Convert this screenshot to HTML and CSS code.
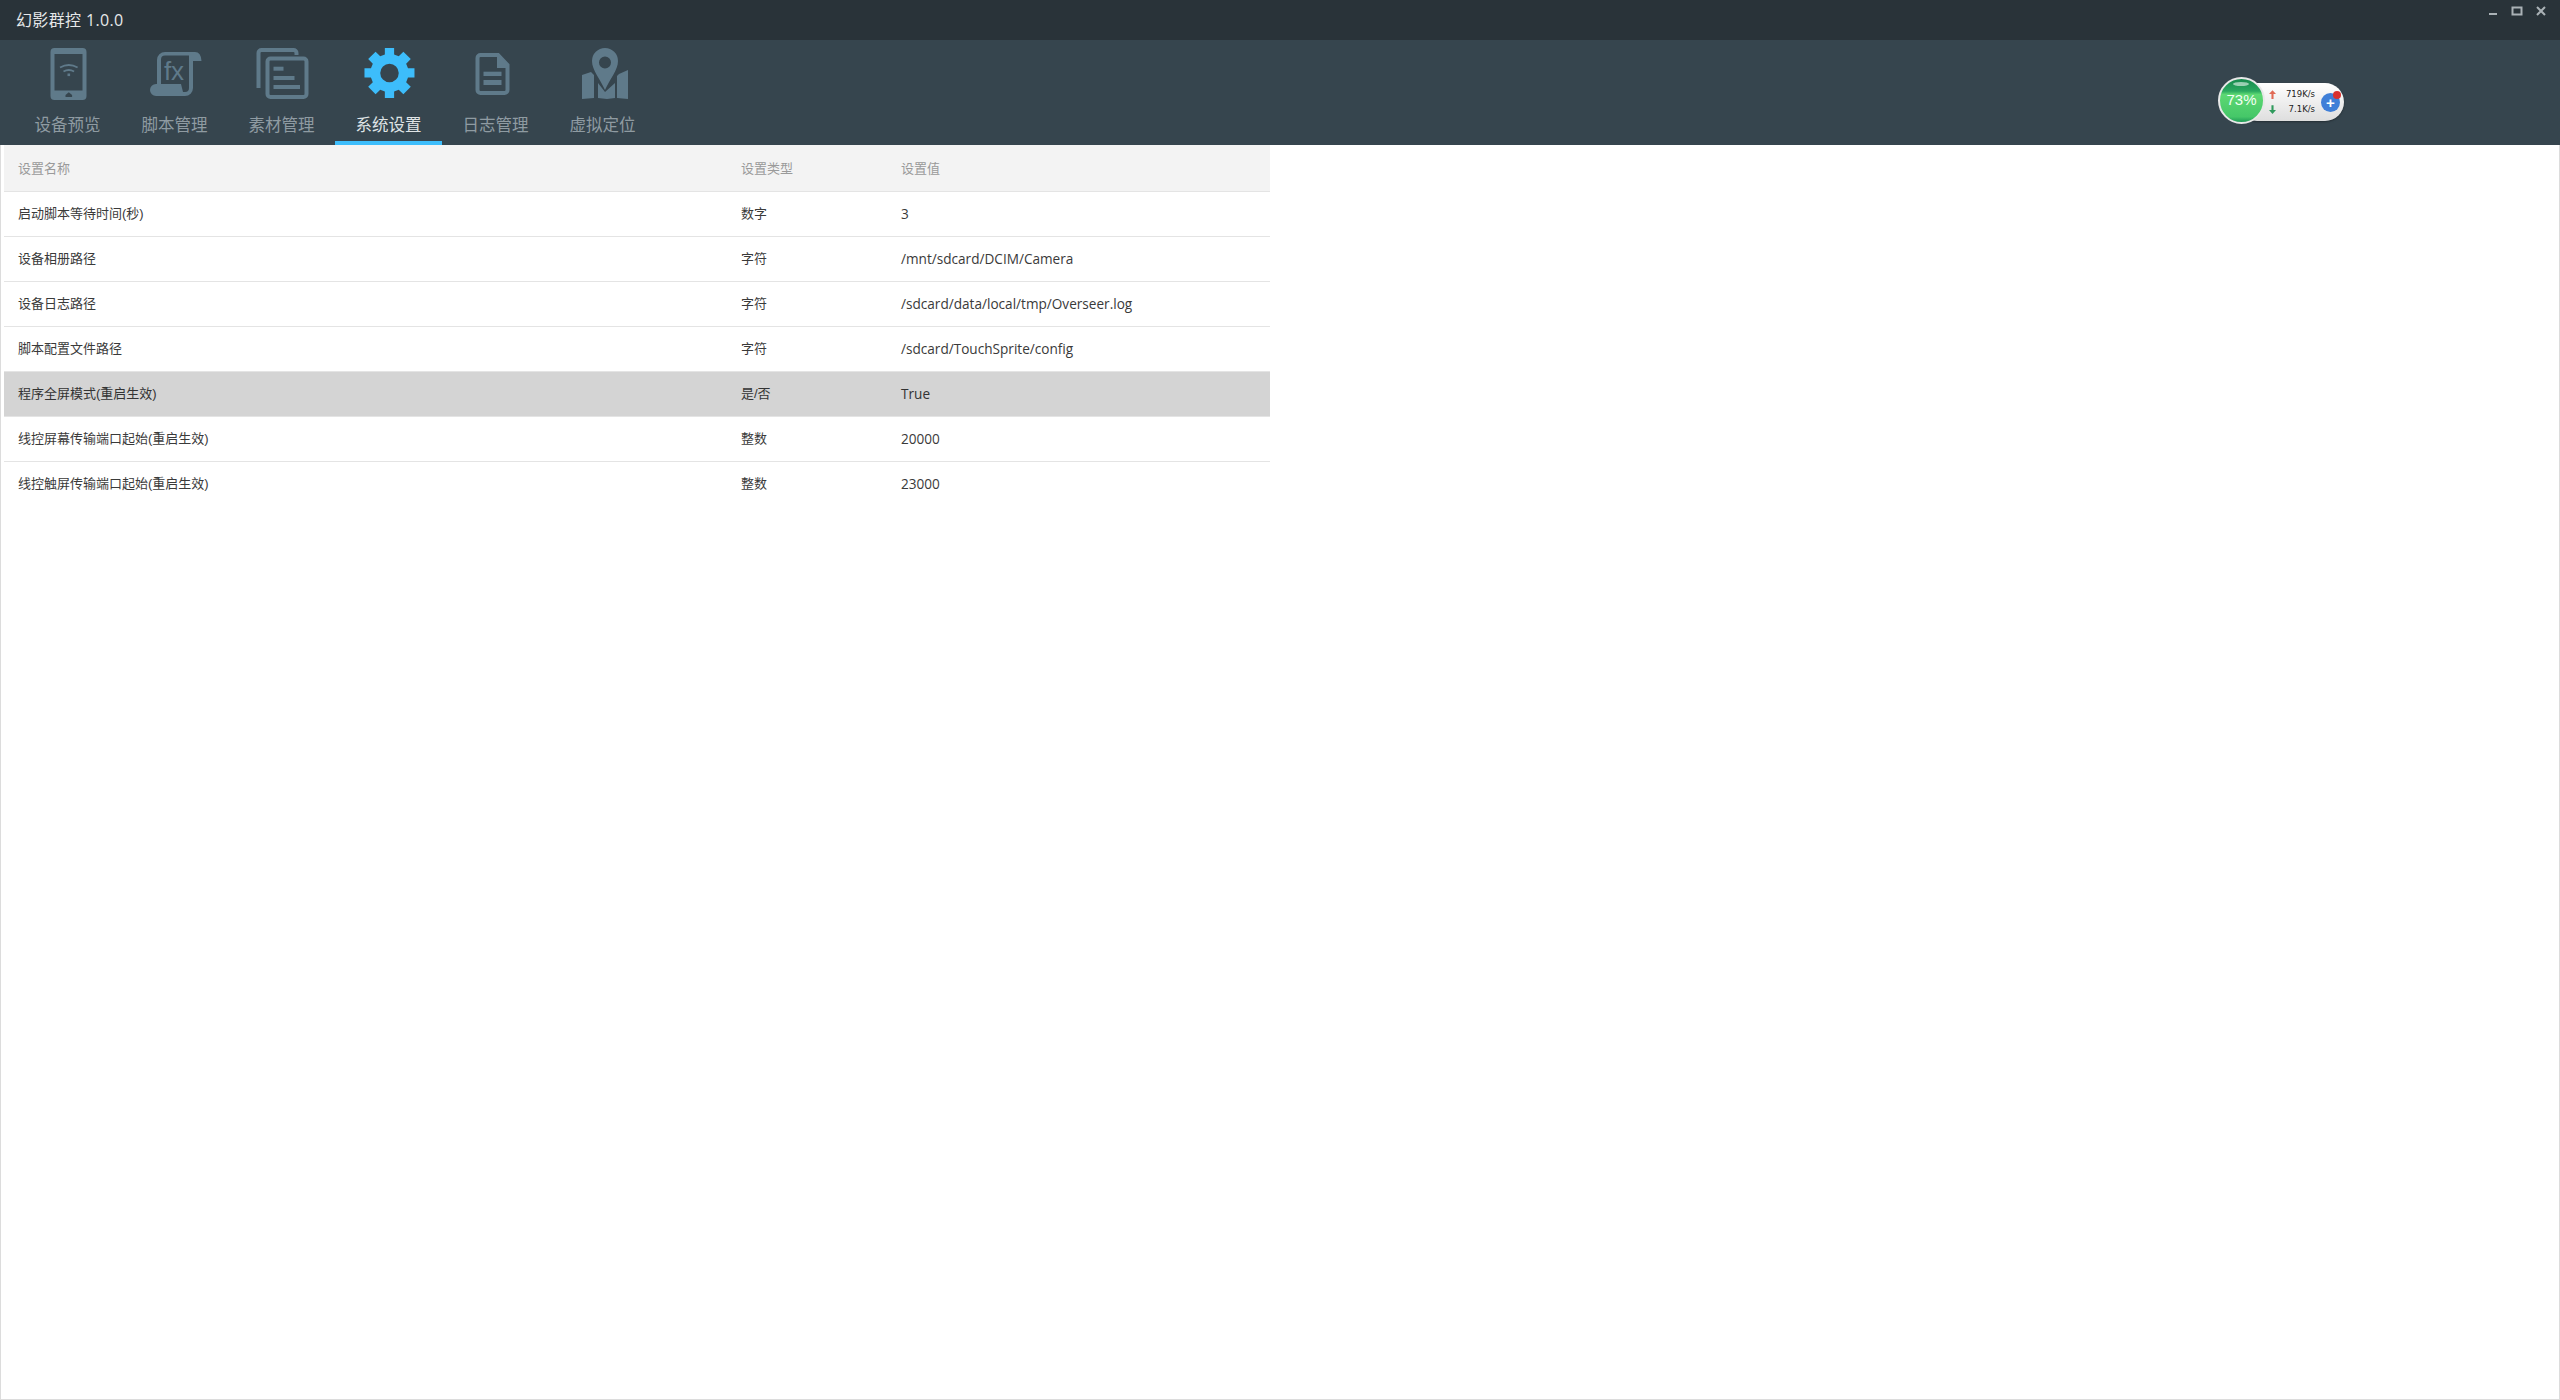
FILE: index.html
```html
<!DOCTYPE html>
<html lang="zh-CN">
  <head>
    <meta charset="UTF-8" />
    <title>幻影群控 1.0.0</title>
    <link rel="stylesheet" href="styles.css">
  </head>
  <body>
    <div class="titlebar">
      <span class="app-title">幻影群控 1.0.0</span>
      <div class="win-buttons">
        <svg width="12" height="12" viewBox="0 0 12 12"><rect x="2" y="8" width="8" height="2" fill="#aab2b6"/></svg>
        <svg width="12" height="12" viewBox="0 0 12 12"><rect x="1.500" y="2.500" width="9" height="7" fill="none" stroke="#aab2b6" stroke-width="2"/></svg>
        <svg width="12" height="12" viewBox="0 0 12 12"><path d="M2 2l8 8M10 2l-8 8" stroke="#aab2b6" stroke-width="2"/></svg>
      </div>
    </div>

    <header class="nav">
      <ul class="tabs">
        <li class="tab">
          <svg class="tab-icon" viewBox="0 0 60 60">
            <path fill-rule="evenodd" d="M16.500 4h28a4 4 0 0 1 4 4v44a4 4 0 0 1-4 4h-28a4 4 0 0 1-4-4V8a4 4 0 0 1 4-4zM16.500 10v36.500h28V10z"/>
            <path d="M27.500 51l3.300-2.800 3.300 2.800v2h-6.600z" fill="#36454e"/>
            <path d="M22 23.500q8.800-5 17.600 0M25.500 27.500q5.300-3 10.600 0" fill="none" stroke="#5f7a8a" stroke-width="1.800"/>
            <rect x="29.500" y="29.500" width="2.600" height="2.600"/>
          </svg>
          <span>设备预览</span>
        </li>
        <li class="tab">
          <svg class="tab-icon" viewBox="0 0 60 60">
            <path fill-rule="evenodd" d="M12 40V16a8 8 0 0 1 8-8H50q6 0 6.500 9H48V44a8 8 0 0 1-8 8H11a6 6 0 0 1 0-12zM16 40H36l2 8h2a4 4 0 0 0 4-4V11.500H20a4 4 0 0 0-4 4z"/>
            <text x="29" y="36" text-anchor="middle" class="fx">fx</text>
          </svg>
          <span>脚本管理</span>
        </li>
        <li class="tab">
          <svg class="tab-icon" viewBox="0 0 60 60">
            <path fill="none" stroke="#5f7a8a" stroke-width="4" d="M6.500 44V9a3 3 0 0 1 3-3h32a3 3 0 0 1 3 3v2"/>
            <rect x="15.500" y="14.500" width="39" height="38.500" rx="3" fill="none" stroke="#5f7a8a" stroke-width="4"/>
            <rect x="21.500" y="22.700" width="10" height="4"/>
            <rect x="21.500" y="32" width="21" height="4"/>
            <rect x="21.500" y="41" width="26.500" height="4"/>
          </svg>
          <span>素材管理</span>
        </li>
        <li class="tab active">
          <svg class="tab-icon" viewBox="0 0 60 60">
            <path transform="translate(2.700 1.200) scale(0.926)" fill-rule="evenodd" d="M25 3h10v7l5 2 5-5 8 8-5 5 2 5h7v10h-7l-2 5 5 5-8 8-5-5-5 2v7H25v-7l-5-2-5 5-8-8 5-5-2-5H3V25h7l2-5-5-5 8-8 5 5 5-2zM30 20a10 10 0 1 0 0 20 10 10 0 0 0 0-20z"/>
          </svg>
          <span>系统设置</span>
        </li>
        <li class="tab">
          <svg class="tab-icon" viewBox="0 0 60 60">
            <path fill="none" stroke="#5f7a8a" stroke-width="4" d="M14.500 11H32L41.500 21V46a3 3 0 0 1-3 3h-24a3 3 0 0 1-3-3V14a3 3 0 0 1 3-3z"/>
            <path d="M31 10l12 11v3H31z"/>
            <rect x="17.500" y="27.700" width="18" height="4.300"/>
            <rect x="17.500" y="36" width="18" height="5"/>
          </svg>
          <span>日志管理</span>
        </li>
        <li class="tab">
          <svg class="tab-icon" viewBox="0 0 60 60">
            <path fill-rule="evenodd" d="M32 4a13 13 0 0 1 13 13c0 9-8 18-13 29-5-11-13-20-13-29A13 13 0 0 1 32 4zM32 12.500a6 6 0 1 0 0 12 6 6 0 0 0 0-12z"/>
            <path d="M9 31l9-3 3 3v23l-12 1zM25 39l7 9 10-9v15l-8 1-9-1zM44 32l2-2 9-4v29l-11-1z"/>
          </svg>
          <span>虚拟定位</span>
        </li>
      </ul>

      <div class="net-widget">
        <div class="net-pill">
          <div class="net-speeds">
            <div class="speed">
              <svg class="arrow" viewBox="0 0 8 10"><path d="M4 0l4 4.500H5.200V10H2.800V4.500H0z" fill="#e06a55"/></svg>
              <span>719K/s</span>
            </div>
            <div class="speed">
              <svg class="arrow" viewBox="0 0 8 10"><path d="M4 10l4-4.500H5.200V0H2.800V5.500H0z" fill="#2f9a5c"/></svg>
              <span>7.1K/s</span>
            </div>
          </div>
          <div class="boost"><span class="boost-dot"></span>+</div>
        </div>
        <div class="ball">
          <span class="ball-shine"></span>
          <span>73%</span>
        </div>
      </div>
    </header>

    <main class="content">
      <table class="settings">
        <thead>
          <tr><th>设置名称</th><th>设置类型</th><th>设置值</th></tr>
        </thead>
        <tbody>
          <tr><td>启动脚本等待时间(秒)</td><td>数字</td><td>3</td></tr>
          <tr><td>设备相册路径</td><td>字符</td><td>/mnt/sdcard/DCIM/Camera</td></tr>
          <tr><td>设备日志路径</td><td>字符</td><td>/sdcard/data/local/tmp/Overseer.log</td></tr>
          <tr><td>脚本配置文件路径</td><td>字符</td><td>/sdcard/TouchSprite/config</td></tr>
          <tr class="selected"><td>程序全屏模式(重启生效)</td><td>是/否</td><td>True</td></tr>
          <tr><td>线控屏幕传输端口起始(重启生效)</td><td>整数</td><td>20000</td></tr>
          <tr><td>线控触屏传输端口起始(重启生效)</td><td>整数</td><td>23000</td></tr>
        </tbody>
      </table>
    </main>
  </body>
</html>
```

FILE: styles.css
```css
* {
  box-sizing: border-box;
}

body {
  margin: 0;
  display: flex;
  flex-direction: column;
  height: 1400px;
  overflow: hidden;
  font-family: "Liberation Sans", "Noto Sans CJK SC", sans-serif;
  background-color: #fff;
}

.titlebar {
  height: 40px;
  padding: 0 13px 0 16px;
  background-color: #293339;
  color: #e6e8e9;
  font-size: 16px;
  display: flex;
  align-items: center;
  justify-content: space-between;
}

.app-title {
  margin-top: -2px;
  font-family: "Open Sans", "Noto Sans CJK SC", sans-serif;
  letter-spacing: 0.35px;
}

.win-buttons {
  display: flex;
  gap: 12px;
  margin-top: -19px;
}

.nav {
  height: 105px;
  padding-left: 14px;
  background-color: #36454e;
  display: flex;
  align-items: flex-start;
  justify-content: space-between;
}

.tabs {
  list-style-type: none;
  margin: 0;
  padding: 0;
  height: 100%;
  display: flex;
}

.tab {
  width: 107px;
  padding-top: 4px;
  display: flex;
  flex-direction: column;
  align-items: center;
  color: #8f9ba2;
  font-size: 16.500px;
  border-bottom: 4px solid transparent;
}

.tab span {
  margin-top: 8px;
}

.tab-icon {
  width: 60px;
  height: 60px;
  flex: none;
  fill: #5f7a8a;
}

.fx {
  font-family: "Liberation Sans", sans-serif;
  font-size: 26px;
  fill: #5f7a8a;
}

.tab.active {
  color: #dfe3e5;
  border-bottom-color: #3dbdfb;
}

.tab.active .tab-icon {
  fill: #3dbdfb;
}

.net-widget {
  position: relative;
  flex: none;
  width: 126px;
  height: 48px;
  margin: 37px 216px 0 0;
}

.net-pill {
  position: absolute;
  left: 20px;
  top: 6px;
  right: 0;
  height: 38px;
  padding-right: 4px;
  border-radius: 19px;
  background: linear-gradient(#ffffff, #dedede);
  box-shadow: 0 1px 2px rgba(0, 0, 0, 0.35);
  display: flex;
  align-items: center;
  justify-content: flex-end;
  gap: 6px;
}

.net-speeds {
  font-family: "DejaVu Sans", sans-serif;
  font-size: 8.500px;
  color: #222;
  line-height: 15px;
}

.speed {
  display: flex;
  align-items: center;
  justify-content: space-between;
  width: 46px;
}

.arrow {
  width: 7px;
  height: 9px;
}

.boost {
  position: relative;
  width: 19px;
  height: 19px;
  border-radius: 50%;
  background-color: #3f7fd8;
  color: #fff;
  font-weight: bold;
  font-size: 15px;
  line-height: 20px;
  text-align: center;
}

.boost-dot {
  position: absolute;
  top: -2px;
  right: -1px;
  width: 8px;
  height: 8px;
  border-radius: 50%;
  background-color: #d9302e;
}

.ball {
  position: absolute;
  left: 0;
  top: 0;
  width: 47px;
  height: 47px;
  border-radius: 50%;
  border: 2px solid #e8e8e8;
  background: linear-gradient(#178a4e 0%, #2aa85f 28%, #5dd873 36%, #45c768 88%, #1f9a57 100%);
  color: #f2fff4;
  font-size: 15px;
  line-height: 41px;
  text-align: center;
}

.ball-shine {
  position: absolute;
  left: 13px;
  top: 3px;
  width: 16px;
  height: 4px;
  border-radius: 50%;
  background-color: rgba(255, 255, 255, 0.55);
}

.content {
  flex: 1;
  padding-left: 3px;
  border-left: 1px solid #dcdcdc;
  border-right: 1px solid #dcdcdc;
  border-bottom: 1px solid #dcdcdc;
}

.settings {
  width: 1266px;
  border-collapse: collapse;
  table-layout: fixed;
  font-size: 13px;
  color: #3a3a3a;
}

.settings th:first-child,
.settings td:first-child {
  width: 723px;
}

.settings th:nth-child(2),
.settings td:nth-child(2) {
  width: 160px;
}

.settings th,
.settings td {
  padding: 0 0 2px 14px;
  text-align: left;
  font-weight: normal;
  border-bottom: 1px solid #e4e4e4;
}

.settings th {
  height: 46px;
  padding-bottom: 1px;
  background-color: #f3f3f3;
  color: #9a9a9a;
}

.settings td {
  height: 45px;
}

.settings td:nth-child(3) {
  font-family: "Open Sans", "Noto Sans CJK SC", sans-serif;
  font-size: 13.600px;
  padding-bottom: 0;
}

.settings tbody tr:last-child td {
  border-bottom: none;
}

.settings tr.selected td {
  background-color: #d4d4d4;
  color: #333;
}
```
